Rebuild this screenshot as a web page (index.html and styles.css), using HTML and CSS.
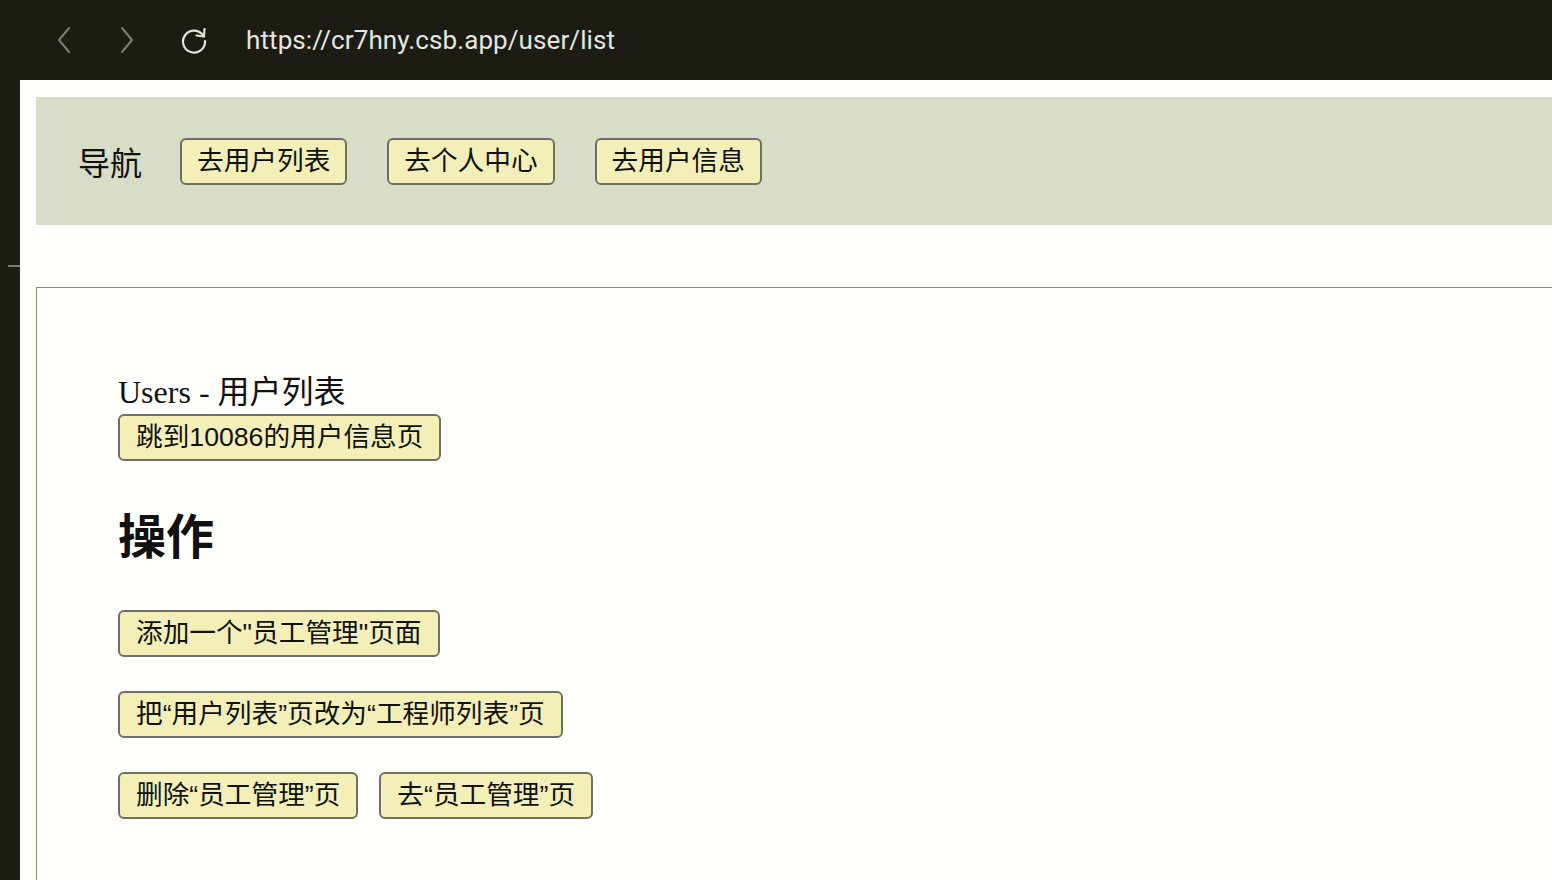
FILE: index.html
```html
<!DOCTYPE html>
<html lang="en">
<head>
    <meta charset="UTF-8">
    <meta name="viewport" content="width=device-width, initial-scale=1.0">
    <title>user list</title>
    <link rel="stylesheet" href="styles.css">
</head>
<body>
    <div class="toolbar">
        <svg class="tool back" width="16" height="28" viewBox="0 0 16 28">
            <path d="M13 2 L3 14 L13 26" fill="none" stroke="#7d7d78" stroke-width="2" stroke-linecap="round" stroke-linejoin="round"/>
        </svg>
        <svg class="tool forward" width="16" height="28" viewBox="0 0 16 28">
            <path d="M3 2 L13 14 L3 26" fill="none" stroke="#7d7d78" stroke-width="2" stroke-linecap="round" stroke-linejoin="round"/>
        </svg>
        <svg class="tool reload" width="28" height="28" viewBox="0 0 28 28">
            <path d="M23.5 10 A11 11 0 1 0 25 15" fill="none" stroke="#e4e4dc" stroke-width="2.2" stroke-linecap="round"/>
            <path d="M16.5 9.5 L24 10.5 L24.5 3" fill="none" stroke="#e4e4dc" stroke-width="2.2" stroke-linecap="round" stroke-linejoin="round"/>
        </svg>
        <span class="url">https://cr7hny.csb.app/user/list</span>
    </div>

    <div class="frame">
        <div class="sidebar"><span class="mark"></span></div>
        <div class="page">
            <div class="nav">
                <span class="nav-title">导航</span>
                <button class="btn">去用户列表</button>
                <button class="btn">去个人中心</button>
                <button class="btn">去用户信息</button>
            </div>

            <div class="content">
                <div class="users-title">Users - 用户列表</div>
                <button class="btn">跳到10086的用户信息页</button>

                <h2 class="ops-title">操作</h2>
                <div class="row"><button class="btn">添加一个"员工管理"页面</button></div>
                <div class="row"><button class="btn">把“用户列表”页改为“工程师列表”页</button></div>
                <div class="row">
                    <button class="btn">删除“员工管理”页</button>
                    <button class="btn">去“员工管理”页</button>
                </div>
            </div>
        </div>
    </div>
</body>
</html>
```

FILE: styles.css
```css
* {
    box-sizing: border-box;
}

body {
    margin: 0;
    background-color: #1c1c15;
    font-family: 'Liberation Serif', 'Noto Sans CJK SC', serif;
    overflow: hidden;
    height: 880px;
}

.toolbar {
    height: 80px;
    display: flex;
    align-items: center;
    padding-left: 56px;
}

.tool {
    flex: none;
}

.forward {
    margin-left: 47px;
}

.reload {
    margin-left: 45px;
}

.url {
    margin-left: 38px;
    color: #e6e6de;
    font-family: 'Roboto', 'Liberation Sans', sans-serif;
    font-size: 26px;
    letter-spacing: 0.1px;
    padding-bottom: 1px;
}

.frame {
    display: flex;
    height: 800px;
}

.sidebar {
    width: 20px;
    flex: none;
    position: relative;
}

.mark {
    position: absolute;
    left: 8px;
    top: 185px;
    width: 12px;
    height: 2px;
    background-color: #7a7a72;
}

.page {
    flex: 1;
    background-color: #fffffb;
    padding: 17px 0 0 16px;
    overflow: hidden;
}

.nav {
    height: 128px;
    background-color: #d8ddc8;
    display: flex;
    align-items: center;
    padding-left: 42px;
}

.nav-title {
    font-size: 32px;
    margin-right: 38px;
    color: #111;
}

.btn {
    height: 47px;
    padding: 0 16px;
    margin: 0;
    background-color: #f3efb6;
    border: 2px solid #6f6f68;
    border-radius: 6px;
    font-family: 'Liberation Sans', 'Noto Sans CJK SC', sans-serif;
    font-size: 26.67px;
    color: #111;
    line-height: 1;
}

.nav .btn {
    padding: 0 15px;
    margin-right: 40px;
}

.content {
    margin-top: 62px;
    width: 1560px;
    height: 700px;
    border: 1px solid #8c8a6a;
    padding: 86px 0 0 81px;
}

.users-title {
    font-size: 32px;
    line-height: 37px;
    color: #111;
    margin-bottom: 3px;
}

.ops-title {
    font-size: 48px;
    line-height: 56px;
    font-weight: bold;
    margin: 49px 0 44px;
    color: #111;
}

.row {
    display: flex;
    gap: 21px;
    margin-bottom: 34px;
}
```
